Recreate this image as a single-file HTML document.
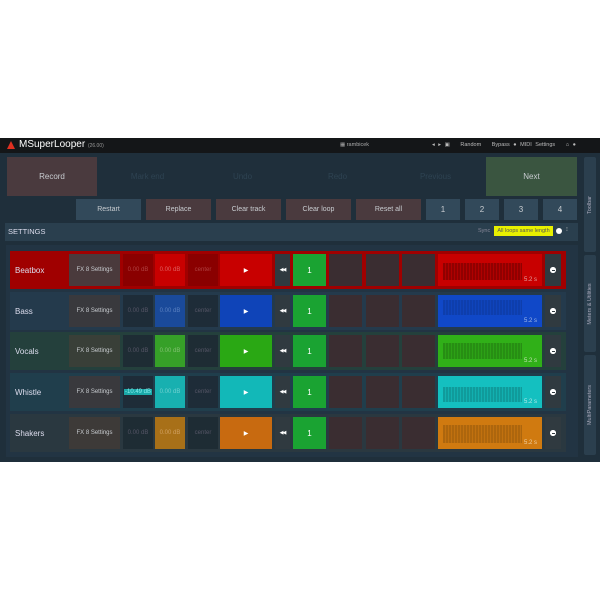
<!DOCTYPE html>
<html><head><meta charset="utf-8"><style>
*{margin:0;padding:0;box-sizing:border-box}
body{width:600px;height:600px;background:#fff;position:relative;overflow:hidden;font-family:"Liberation Sans",sans-serif}
.a{position:absolute}
.c{position:absolute;display:flex;align-items:center;justify-content:center;font-size:6px;color:#c8ccd0}
.plug{left:0;top:138px;width:600px;height:324px;background:#1f2f3b}
.top{left:0;top:138px;width:600px;height:15px;background:#141618}
.btn{font-size:7px;color:#c8ccd0}
.row{position:absolute;left:10px;width:556px;height:38px}
.fx{left:59px;width:51px;top:3px;height:32px;background:#39393d}
.v1{left:113px;width:30px;top:3px;height:32px}
.v2{left:145px;width:30px;top:3px;height:32px}
.pn{left:178px;width:30px;top:3px;height:32px}
.pl{left:210px;width:52px;top:3px;height:32px;font-size:6px;color:#fff}
.rw{left:265px;width:15px;top:3px;height:32px;background:#303a40;color:#fff;font-size:5px;letter-spacing:-1px}
.one{left:283px;width:33px;top:3px;height:32px;background:#1aa332;color:#fff;font-size:8px}
.e1,.e2,.e3{top:3px;height:32px;width:33px;background:#3a2d31}
.e1{left:319px}.e2{left:356px}.e3{left:392px}
.wv{left:428px;width:104px;top:3px;height:32px;justify-content:flex-end;align-items:flex-end;padding:0 5px 3px 0;font-size:6px}
.wv i{position:absolute;left:5px;right:20px;top:9px;bottom:6px;background:repeating-linear-gradient(90deg,rgba(0,0,0,.28) 0 2px,rgba(0,0,0,.12) 2px 3px)}
.mn{left:535px;width:16px;top:3px;height:32px;background:#303a40}
.mn::after{content:"";width:6px;height:6px;border-radius:50%;background:#fff;box-shadow:inset 0 0 0 2.5px #fff}
.mn::before{content:"";position:absolute;width:3px;height:1px;background:#303a40;left:6.5px;top:15.5px;z-index:2}
.nm{left:5px;top:0;height:38px;font-size:8px;color:#dde;justify-content:flex-start}
.tab{position:absolute;left:584px;width:12px;background:#2b3f4e;border-radius:2px}
.tab span{position:absolute;left:50%;top:50%;transform:translate(-50%,-50%) rotate(-90deg);white-space:nowrap;font-size:5.5px;color:#aab}
</style></head><body>
<div class="a plug"></div>
<div class="a top"></div>
<div class="a" style="left:7px;top:141px;width:0;height:0;border-left:4px solid transparent;border-right:4px solid transparent;border-bottom:8px solid #e03020"></div>
<div class="a" style="left:19px;top:139px;font-size:10px;color:#fff">MSuperLooper <span style="font-size:5px;color:#999">(26.00)</span></div>
<div class="a" style="left:340px;top:142px;font-size:5.5px;color:#aaa">▦ rambicek</div>
<div class="a" style="left:432px;top:142px;font-size:5.5px;color:#bbb;word-spacing:2px">◂ ▸ ▣ &nbsp; Random &nbsp; Bypass ● MIDI Settings &nbsp; ⌂ ●</div>

<div class="c btn" style="left:7px;top:157px;width:90px;height:39px;background:#4a3a3e;font-size:8px">Record</div>
<div class="c btn" style="left:100px;top:157px;width:95px;height:39px;color:#2e4352;font-size:8px">Mark end</div>
<div class="c btn" style="left:195px;top:157px;width:95px;height:39px;color:#2e4352;font-size:8px">Undo</div>
<div class="c btn" style="left:290px;top:157px;width:95px;height:39px;color:#2e4352;font-size:8px">Redo</div>
<div class="c btn" style="left:388px;top:157px;width:95px;height:39px;color:#2e4352;font-size:8px">Previous</div>
<div class="c btn" style="left:486px;top:157px;width:91px;height:39px;background:#3a5540;font-size:8px">Next</div>

<div class="c btn" style="left:76px;top:199px;width:65px;height:21px;background:#32495a">Restart</div>
<div class="c btn" style="left:146px;top:199px;width:65px;height:21px;background:#4a3a3e">Replace</div>
<div class="c btn" style="left:216px;top:199px;width:65px;height:21px;background:#4a3a3e">Clear track</div>
<div class="c btn" style="left:286px;top:199px;width:65px;height:21px;background:#4a3a3e">Clear loop</div>
<div class="c btn" style="left:356px;top:199px;width:65px;height:21px;background:#4a3a3e">Reset all</div>
<div class="c btn" style="left:426px;top:199px;width:34px;height:21px;background:#32495a;font-size:8px">1</div>
<div class="c btn" style="left:465px;top:199px;width:34px;height:21px;background:#32495a;font-size:8px">2</div>
<div class="c btn" style="left:504px;top:199px;width:34px;height:21px;background:#32495a;font-size:8px">3</div>
<div class="c btn" style="left:543px;top:199px;width:34px;height:21px;background:#32495a;font-size:8px">4</div>

<div class="a" style="left:5px;top:223px;width:573px;height:18px;background:#2a3f4e"></div>
<div class="a" style="left:8px;top:227px;font-size:7.5px;color:#dde">SETTINGS</div>
<div class="a" style="left:478px;top:228px;font-size:5.5px;color:#889">Sync</div>
<div class="c" style="left:494px;top:226px;width:59px;height:10px;background:#e8f000;color:#555;font-size:5.5px">All loops same length</div>
<div class="a" style="left:556px;top:228px;width:6px;height:6px;border-radius:50%;background:#fff"></div>
<div class="a" style="left:566px;top:226px;font-size:6px;color:#ccc">⁝</div>

<div class="a" style="left:6px;top:245px;width:572px;height:212px;background:#223443"></div>

<div class="row" style="top:251px;background:#a00000">
<div class="c nm">Beatbox</div><div class="c fx" style="background:#4a3a3c">FX 8 Settings</div>
<div class="c v1" style="background:#8a0000;color:#b04040">0.00 dB</div><div class="c v2" style="background:#c80000;color:#e06060">0.00 dB</div><div class="c pn" style="background:#8a0000;color:#b04040">center</div>
<div class="c pl" style="background:#c80000">▶</div><div class="c rw">◀◀</div><div class="c one">1</div>
<div class="c e1"></div><div class="c e2"></div><div class="c e3"></div>
<div class="c wv" style="background:#c80000;color:#e0a0a0"><i></i>5.2 s</div><div class="c mn"></div></div>

<div class="row" style="top:292px;background:#243a4c">
<div class="c nm">Bass</div><div class="c fx">FX 8 Settings</div>
<div class="c v1" style="background:#1e2c38;color:#556">0.00 dB</div><div class="c v2" style="background:#1a4a9a;color:#5a80c0">0.00 dB</div><div class="c pn" style="background:#1e2c38;color:#556">center</div>
<div class="c pl" style="background:#0f44b8">▶</div><div class="c rw">◀◀</div><div class="c one">1</div>
<div class="c e1"></div><div class="c e2"></div><div class="c e3"></div>
<div class="c wv" style="background:#1048c8;color:#a0b8e8"><i style="top:5px;bottom:12px;opacity:.5"></i>5.2 s</div><div class="c mn"></div></div>

<div class="row" style="top:332px;background:#24403c">
<div class="c nm">Vocals</div><div class="c fx" style="background:#393f38">FX 8 Settings</div>
<div class="c v1" style="background:#1e2c34;color:#556">0.00 dB</div><div class="c v2" style="background:#36a028;color:#80c070">0.00 dB</div><div class="c pn" style="background:#1e2c34;color:#556">center</div>
<div class="c pl" style="background:#2aa814">▶</div><div class="c rw">◀◀</div><div class="c one">1</div>
<div class="c e1"></div><div class="c e2"></div><div class="c e3"></div>
<div class="c wv" style="background:#30b018;color:#c0e0b0"><i style="top:8px;bottom:8px;opacity:.7"></i>5.2 s</div><div class="c mn"></div></div>

<div class="row" style="top:373px;background:#203e4c">
<div class="c nm">Whistle</div><div class="c fx">FX 8 Settings</div>
<div class="c v1" style="background:#1e2c38;color:#556"><span style="background:#1aa8a8;color:#8ee;width:28px;text-align:center">-10.49 dB</span></div><div class="c v2" style="background:#18b0b0;color:#70d0d0">0.00 dB</div><div class="c pn" style="background:#1e2c38;color:#556">center</div>
<div class="c pl" style="background:#12b8b8">▶</div><div class="c rw">◀◀</div><div class="c one">1</div>
<div class="c e1"></div><div class="c e2"></div><div class="c e3"></div>
<div class="c wv" style="background:#14c0c0;color:#b0e8e8"><i style="top:11px;bottom:6px;opacity:.7"></i>5.2 s</div><div class="c mn"></div></div>

<div class="row" style="top:414px;background:#2a3840">
<div class="c nm">Shakers</div><div class="c fx" style="background:#3d3a38">FX 8 Settings</div>
<div class="c v1" style="background:#1e2c34;color:#556">0.00 dB</div><div class="c v2" style="background:#a87018;color:#d0a060">0.00 dB</div><div class="c pn" style="background:#1e2c34;color:#556">center</div>
<div class="c pl" style="background:#c86a10">▶</div><div class="c rw">◀◀</div><div class="c one">1</div>
<div class="c e1"></div><div class="c e2"></div><div class="c e3"></div>
<div class="c wv" style="background:#d07a10;color:#f0d0a0"><i style="top:8px;bottom:6px;opacity:.6"></i>5.2 s</div><div class="c mn"></div></div>

<div class="tab" style="top:157px;height:95px"><span>Toolbar</span></div>
<div class="tab" style="top:255px;height:97px"><span>Meters &amp; Utilities</span></div>
<div class="tab" style="top:355px;height:100px"><span>MultiParameters</span></div>
</body></html>
